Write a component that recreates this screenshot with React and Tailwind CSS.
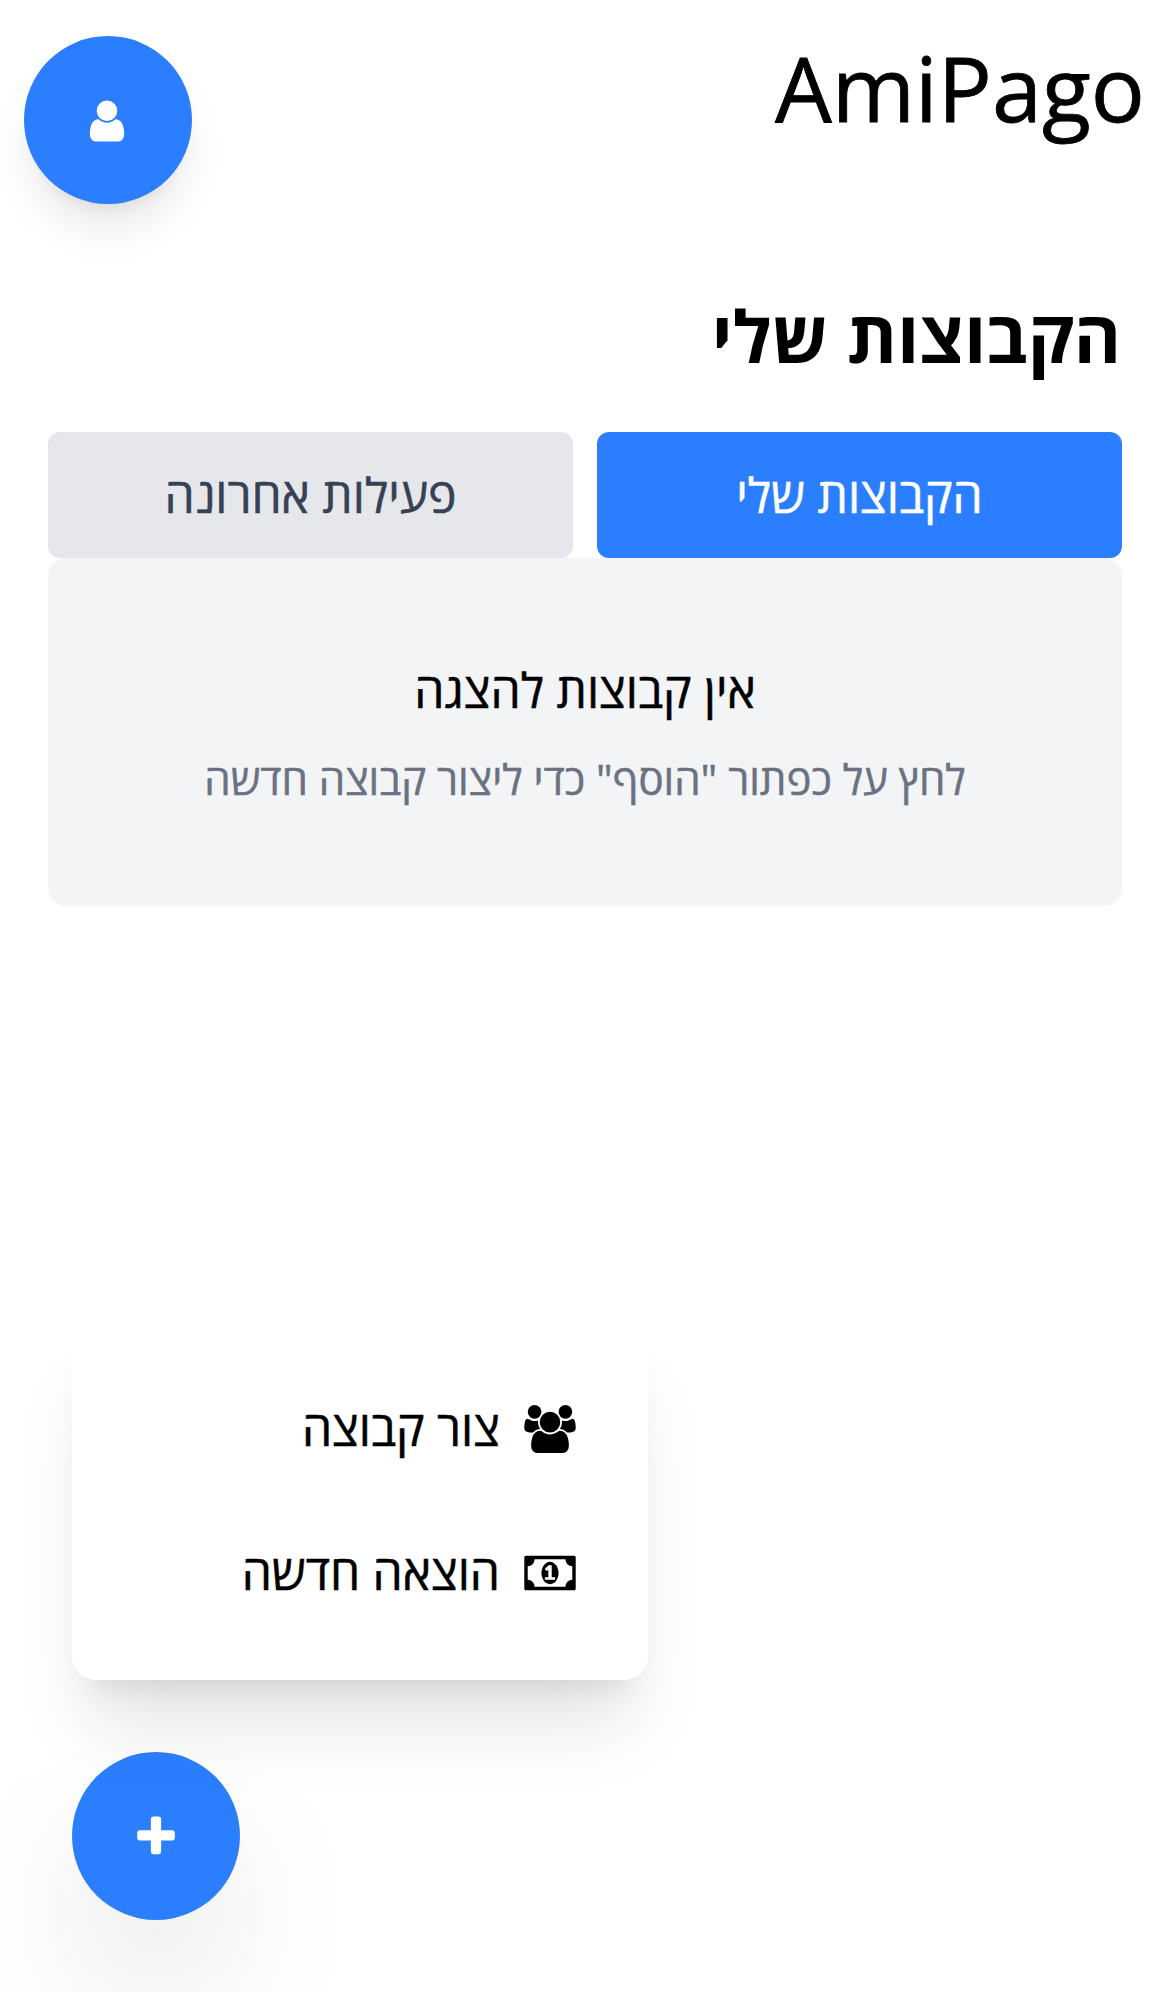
const icons = {
  user: {
    viewBox: '0 0 1792 1792',
    d: 'M1536 1399q0 109-62.5 187t-150.5 78h-854q-88 0-150.5-78t-62.5-187q0-85 8.5-160.5t31.5-152 58.5-131 94-89 134.5-34.5q131 128 313 128t313-128q76 0 134.5 34.5t94 89 58.5 131 31.5 152 8.5 160.5zm-256-887q0 159-112.5 271.5t-271.5 112.5-271.5-112.5-112.5-271.5 112.5-271.5 271.5-112.5 271.5 112.5 112.5 271.5z',
  },
  plus: {
    viewBox: '0 0 1792 1792',
    d: 'M1600 736v192q0 40-28 68t-68 28h-416v416q0 40-28 68t-68 28h-192q-40 0-68-28t-28-68v-416h-416q-40 0-68-28t-28-68v-192q0-40 28-68t68-28h416v-416q0-40 28-68t68-28h192q40 0 68 28t28 68v416h416q40 0 68 28t28 68z',
  },
  users: {
    viewBox: '0 0 1920 1792',
    d: 'M593 896q-162 5-265 128h-134q-82 0-138-40.5t-56-118.5q0-353 124-353 6 0 43.5 21t97.5 42.5 119 21.5q67 0 133-23-5 37-5 66 0 139 81 256zm1071 637q0 120-73 189.5t-194 69.5h-874q-121 0-194-69.5t-73-189.5q0-53 3.5-103.5t14-109 26.5-108.5 43-97.5 62-81 85.5-53.5 111.5-20q10 0 43 21.5t73 48 107 48 135 21.5 135-21.5 107-48 73-48 43-21.5q61 0 111.5 20t85.5 53.5 62 81 43 97.5 26.5 108.5 14 109 3.5 103.5zm-1024-1277q0 106-75 181t-181 75-181-75-75-181 75-181 181-75 181 75 75 181zm704 384q0 159-112.5 271.5t-271.5 112.5-271.5-112.5-112.5-271.5 112.5-271.5 271.5-112.5 271.5 112.5 112.5 271.5zm576 225q0 78-56 118.5t-138 40.5h-134q-103-123-265-128 81-117 81-256 0-29-5-66 66 23 133 23 59 0 119-21.5t97.5-42.5 43.5-21q124 0 124 353zm-128-609q0 106-75 181t-181 75-181-75-75-181 75-181 181-75 181 75 75 181z',
  },
  money: {
    viewBox: '0 0 1920 1792',
    d: 'M768 1152h384v-96h-128v-448h-114l-148 137 77 80q42-37 55-57h2v288h-128v96zm512-256q0 70-21 142t-59.5 134-101.5 101-138 39-138-39-101.5-101-59.5-134-21-142 21-142 59.5-134 101.5-101 138-39 138 39 101.5 101 59.5 134 21 142zm512 256v-512q-106 0-181-75t-75-181h-1152q0 106-75 181t-181 75v512q106 0 181 75t75 181h1152q0-106 75-181t181-75zm128-832v1152q0 26-19 45t-45 19h-1792q-26 0-45-19t-19-45v-1152q0-26 19-45t45-19h1792q26 0 45 19t19 45z',
  },
};

function Icon({ name, className }) {
  const icon = icons[name];
  return (
    <svg viewBox={icon.viewBox} fill="currentColor" aria-hidden="true" className={className}>
      <path d={icon.d} />
    </svg>
  );
}

function MenuItem({ icon, label }) {
  return (
    <button className="flex h-36 w-full items-center gap-6 px-12 text-[48px] leading-[72px] [-webkit-text-stroke:0.5px_currentColor]">
      <Icon name={icon} className="mt-px h-12 w-[52px] shrink-0" />
      <span>{label}</span>
    </button>
  );
}

export default function App() {
  return (
    <div
      dir="rtl"
      className="relative flex h-[1992px] flex-col overflow-hidden bg-white font-['Open_Sans',sans-serif] text-black"
    >
      <header className="flex items-start justify-between px-6 pt-9">
        <h1 className="-mt-[3px] mr-px text-[90px] leading-[108px] [-webkit-text-stroke:0.8px_currentColor]">
          AmiPago
        </h1>
        <button
          aria-label="פרופיל"
          className="flex size-42 items-center justify-center rounded-full bg-[#2b7fff] text-white shadow-[0_30px_45px_-9px_rgb(0_0_0/0.1),0_12px_18px_-12px_rgb(0_0_0/0.1)]"
        >
          <Icon name="user" className="mt-px size-12 -translate-x-px" />
        </button>
      </header>

      <main className="px-12 pt-[83px]">
        <h2 className="mr-px text-[72px] leading-24 font-bold">הקבוצות שלי</h2>
        <div className="mt-[49px] grid grid-cols-2 gap-6 text-[48px] leading-[72px] [-webkit-text-stroke:0.5px_currentColor]">
          <button className="h-[126px] rounded-[12px] bg-[#2b7fff] text-white">הקבוצות שלי</button>
          <button className="h-[126px] rounded-[12px] bg-[#e5e7eb] text-[#364153]">פעילות אחרונה</button>
        </div>
        <section className="flex h-[348px] flex-col items-center rounded-[18px] bg-[#f3f4f6] pt-24 [-webkit-text-stroke:0.5px_currentColor]">
          <p className="text-[48px] leading-[72px]">אין קבוצות להצגה</p>
          <p className="mt-[23px] text-[42px] leading-[60px] text-[#6a7282]">
            לחץ על כפתור "הוסף" כדי ליצור קבוצה חדשה
          </p>
        </section>
      </main>

      <div className="mt-auto mb-[72px] flex flex-col items-end gap-[72px] px-[72px]">
        <div className="relative z-10 w-[576px] rounded-[24px] bg-white px-6 py-9 shadow-[0_60px_75px_-15px_rgb(0_0_0/0.1),0_24px_30px_-18px_rgb(0_0_0/0.1)]">
          <MenuItem icon="users" label="צור קבוצה" />
          <MenuItem icon="money" label="הוצאה חדשה" />
        </div>
        <button
          aria-label="הוסף"
          className="flex size-42 items-center justify-center rounded-full bg-[#2b7fff] text-white shadow-[0_75px_150px_-36px_rgb(0_0_0/0.25)]"
        >
          <Icon name="plus" className="mt-px size-12" />
        </button>
      </div>
    </div>
  );
}
